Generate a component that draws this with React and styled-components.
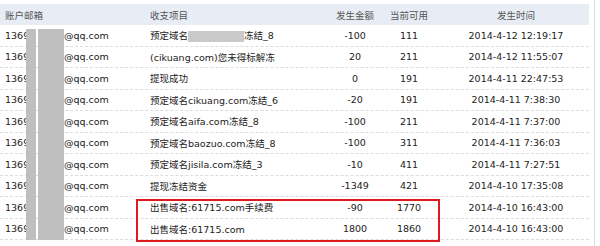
import React from 'react'
import styled, { createGlobalStyle } from 'styled-components'

const GlobalStyle = createGlobalStyle`
  body {
    margin: 0;
    background: #ffffff;
  }
`

const rows = [
  { item: '预定域名', masked: true, tail: '冻结_8', amount: '-100', balance: '111', time: '2014-4-12 12:19:17' },
  { item: '(cikuang.com)您未得标解冻', amount: '20', balance: '211', time: '2014-4-12 11:55:07' },
  { item: '提现成功', amount: '0', balance: '191', time: '2014-4-11 22:47:53' },
  { item: '预定域名cikuang.com冻结_6', amount: '-20', balance: '191', time: '2014-4-11 7:38:30' },
  { item: '预定域名aifa.com冻结_8', amount: '-100', balance: '211', time: '2014-4-11 7:37:00' },
  { item: '预定域名baozuo.com冻结_8', amount: '-100', balance: '311', time: '2014-4-11 7:36:03' },
  { item: '预定域名jisila.com冻结_3', amount: '-10', balance: '411', time: '2014-4-11 7:27:51' },
  { item: '提现冻结资金', amount: '-1349', balance: '421', time: '2014-4-10 17:35:08' },
  { item: '出售域名:61715.com手续费', amount: '-90', balance: '1770', time: '2014-4-10 16:43:00' },
  { item: '出售域名:61715.com', amount: '1800', balance: '1860', time: '2014-4-10 16:43:00' },
]

function App() {
  return (
    <Page>
      <GlobalStyle />
      <Table>
        <HeaderRow>
          <Cell>账户邮箱</Cell>
          <Cell>收支项目</Cell>
          <Cell center>发生金额</Cell>
          <Cell center>当前可用</Cell>
          <Cell center time>发生时间</Cell>
        </HeaderRow>
        {rows.map((r, i) => (
          <Row key={i}>
            <Cell>
              <Prefix>1369</Prefix>@qq.com
            </Cell>
            <Cell>
              {r.item}
              {r.masked && <InlineMask />}
              {r.tail}
            </Cell>
            <Cell center>{r.amount}</Cell>
            <Cell center>{r.balance}</Cell>
            <Cell center time>{r.time}</Cell>
          </Row>
        ))}
      </Table>

      {/* redaction bars over the email column */}
      <Redaction left={26} width={10} />
      <Redaction left={38} width={26} />
      <Highlight />
    </Page>
  )
}

export default App

const Page = styled.div`
  position: relative;
  width: 595px;
  height: 246px;
  border-right: 1px solid #dcdfe4;
  padding-top: 4px;
  box-sizing: border-box;
  font-family: "DejaVu Sans", Verdana, "Noto Sans CJK SC", sans-serif;
  font-size: 9.5px;
  color: #222;
`

const Table = styled.div`
  width: 589px;
`

const grid = `
  display: grid;
  grid-template-columns: 145px 180px 60px 48px 156px;
  align-items: center;
  box-sizing: border-box;
`

const HeaderRow = styled.div`
  ${grid}
  height: 21px;
  background: #e8edf5;
  color: #555;
`

const Row = styled.div`
  ${grid}
  height: 21.5px;
  border-bottom: 1px dashed #dcdcdc;
`

const Cell = styled.div`
  padding-left: ${p => (p.center ? (p.time ? '10px' : '0') : '5px')};
  text-align: ${p => (p.center ? 'center' : 'left')};
  white-space: nowrap;
  overflow: hidden;
`

const Prefix = styled.span`
  display: inline-block;
  width: 59px;
  vertical-align: bottom;
`

const InlineMask = styled.span`
  display: inline-block;
  width: 56px;
  height: 11px;
  background: #c9c9c9;
  vertical-align: middle;
`

const Redaction = styled.div`
  position: absolute;
  top: 29px;
  left: ${p => p.left}px;
  width: ${p => p.width}px;
  height: 211px;
  background: #bfbfbf;
`

const Highlight = styled.div`
  position: absolute;
  left: 136px;
  top: 199px;
  width: 304px;
  height: 43px;
  border: 2px solid #e0191e;
  box-sizing: border-box;
`
